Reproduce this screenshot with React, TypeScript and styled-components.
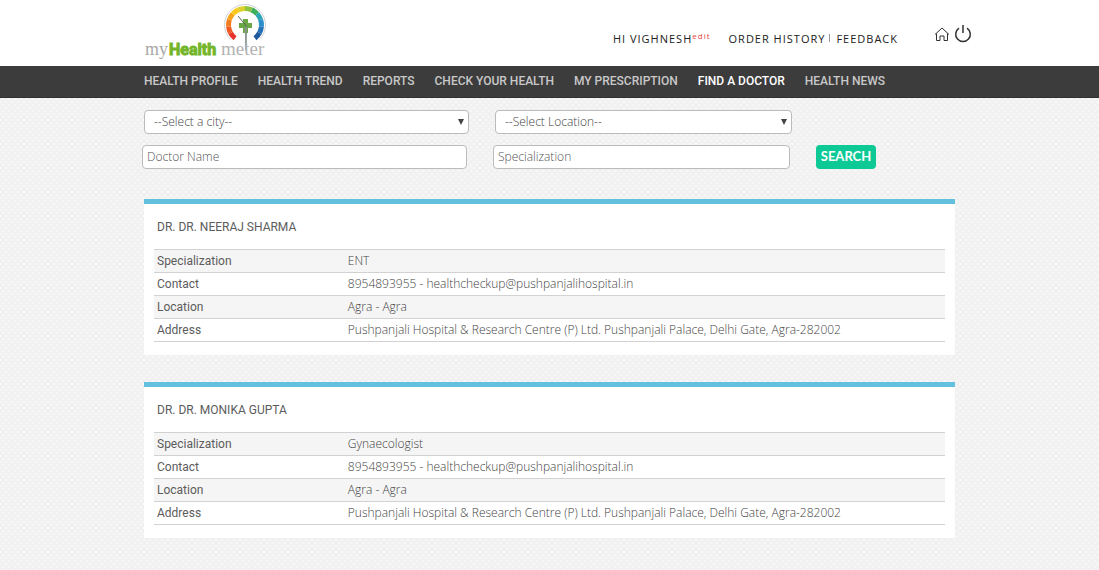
import React from "react";
import styled, { createGlobalStyle } from "styled-components";

const GlobalStyle = createGlobalStyle`
  * { box-sizing: border-box; }
  body {
    margin: 0;
    background-color: #f1f1f1;
    background-image: radial-gradient(#f7f7f7 1px, transparent 1px), radial-gradient(#f7f7f7 1px, transparent 1px);
    background-size: 6px 6px;
    background-position: 0 0, 3px 3px;
    color: #666;
    font-family: "Open Sans", sans-serif;
    font-size: 12px;
    font-weight: 300;
  }
`;

const Container = styled.div`
  width: 100%;
  max-width: 843px;
  margin: 0 auto;
  padding: 0 16px;
`;

const Header = styled.header`
  background: #fff;
`;

const HeaderInner = styled(Container)`
  display: flex;
  justify-content: space-between;
  align-items: flex-start;
  height: 66px;
`;

const LogoLink = styled.a`
  display: block;
  height: 66px;
  svg { display: block; }
`;

const UserBar = styled.div`
  display: flex;
  align-items: center;
  height: 30px;
  margin-top: 23px;
  margin-right: -17px;
  font-size: 11px;
  font-weight: 400;
  letter-spacing: 1px;
`;

const Greeting = styled.span`
  margin-right: 18px;
  color: #222;
`;

const EditLink = styled.a`
  position: relative;
  top: -4px;
  color: #e8413c;
  font-size: 8px;
  text-decoration: none;
`;

const TopLink = styled.a`
  color: #222;
  text-decoration: none;
`;

const Separator = styled.span`
  width: 1px;
  height: 8px;
  margin: 0 6px 0 4px;
  background: #999;
`;

const IconGroup = styled.div`
  display: flex;
  align-items: center;
  gap: 4px;
  margin-left: 36px;
  padding-bottom: 8px;
`;

const IconLink = styled.a`
  display: block;
  color: #333;
  svg { display: block; }
`;

const Nav = styled.nav`
  background: #3c3c3c;
  border-bottom: 1px solid #2f2f2f;
`;

const NavInner = styled(Container)`
  display: flex;
  gap: 20px;
`;

const NavLink = styled.a<{ $active?: boolean }>`
  padding: 7px 0 8px;
  color: ${(p) => (p.$active ? "#fff" : "#c8c8c8")};
  font-family: Roboto, sans-serif;
  font-size: 12px;
  font-weight: 500;
  line-height: 16px;
  text-decoration: none;
  white-space: nowrap;
`;

const SearchForm = styled.form`
  display: grid;
  gap: 11px;
  padding: 12px 0 30px;
`;

const FieldRow = styled.div<{ $outset?: boolean }>`
  display: grid;
  grid-template-columns: 325fr 297fr 60px;
  column-gap: 26px;
  margin-left: ${(p) => (p.$outset ? "-2px" : "0")};
  padding-right: ${(p) => (p.$outset ? "79px" : "77px")};
`;

const SelectBox = styled.div`
  position: relative;
  svg {
    position: absolute;
    top: 9px;
    right: 5px;
    pointer-events: none;
  }
`;

const Select = styled.select`
  display: block;
  width: 100%;
  height: 24px;
  padding: 0 20px 2px 9px;
  border: 1px solid #bbb;
  border-radius: 4px;
  background: #fff;
  color: #444;
  font: inherit;
  appearance: none;
`;

const TextInput = styled.input`
  width: 100%;
  height: 24px;
  padding: 0 4px 2px;
  border: 1px solid #bbb;
  border-radius: 4px;
  background: #fff;
  color: #444;
  font: inherit;
  &::placeholder { color: #555; opacity: 1; }
`;

const SearchButton = styled.button`
  height: 24px;
  padding: 0 0 2px;
  border: 0;
  border-radius: 4px;
  background: #0dc996;
  color: #fff;
  font-family: Lato, sans-serif;
  font-size: 13px;
  font-weight: 700;
`;

const Results = styled.section`
  display: grid;
  gap: 27px;
  padding-bottom: 31px;
`;

const Card = styled.article`
  padding: 14px 10px 13px;
  border-top: 5px solid #64c1de;
  background: #fff;
`;

const DoctorName = styled.h2`
  margin: 0 0 13px;
  padding: 0 3px;
  color: #5c5c5c;
  font-family: Roboto, sans-serif;
  font-size: 12px;
  font-weight: 400;
  line-height: 18px;
`;

const Details = styled.table`
  width: 100%;
  border-collapse: collapse;
  table-layout: fixed;
  line-height: 18px;
`;

const DetailRow = styled.tr`
  border-top: 1px solid #d2d2d2;
  border-bottom: 1px solid #d2d2d2;
  &:nth-child(odd) { background: #f5f5f5; }
`;

const Label = styled.th`
  width: 24%;
  padding: 2px 3px;
  color: #5c5c5c;
  font-family: Roboto, sans-serif;
  font-weight: 400;
  text-align: left;
`;

const Value = styled.td`
  padding: 2px 4px;
  color: #444;
`;

const navItems = [
  "HEALTH PROFILE",
  "HEALTH TREND",
  "REPORTS",
  "CHECK YOUR HEALTH",
  "MY PRESCRIPTION",
  "FIND A DOCTOR",
  "HEALTH NEWS",
];

const clinic = {
  contact: "8954893955 - healthcheckup@pushpanjalihospital.in",
  location: "Agra - Agra",
  address:
    "Pushpanjali Hospital & Research Centre (P) Ltd. Pushpanjali Palace, Delhi Gate, Agra-282002",
};

const doctors = [
  { name: "DR. DR. NEERAJ SHARMA", specialization: "ENT", ...clinic },
  { name: "DR. DR. MONIKA GUPTA", specialization: "Gynaecologist", ...clinic },
];

const gaugeColors = [
  "#e5352b", "#ee5a24", "#f47c20", "#f9a51a", "#fcc81c", "#dcd02c",
  "#8fc43f", "#3fae5a", "#2ba5b5", "#2b8fcb", "#2473b8", "#1f5a9e",
];

function point(angle: number, radius: number) {
  const rad = (angle * Math.PI) / 180;
  return `${(101 + radius * Math.sin(rad)).toFixed(2)} ${(25 - radius * Math.cos(rad)).toFixed(2)}`;
}

function arc(from: number, to: number, radius: number) {
  const large = to - from > 180 ? 1 : 0;
  return `M${point(from, radius)} A${radius} ${radius} 0 ${large} 1 ${point(to, radius)}`;
}

function Logo() {
  const start = -143;
  const step = 286 / gaugeColors.length;
  return (
    <svg width="130" height="66" viewBox="0 0 130 66" role="img" aria-label="my Health meter">
      <path d={arc(-135, 135, 20.5)} fill="none" stroke="#cfd4d8" strokeWidth="1" />
      {gaugeColors.map((color, i) => (
        <path
          key={color}
          d={arc(start + i * step, start + (i + 1) * step, 16.5)}
          fill="none"
          stroke={color}
          strokeWidth="5"
        />
      ))}
      <path d="M99 19h5v4h4v5h-4v5h-5v-5h-4v-5h4z" fill="#69a843" />
      <path d="M94 16l8 9.500v25" fill="none" stroke="#55625c" strokeWidth="1" />
      <path d="M100.500 27h2.500l-1 24z" fill="#8b9692" />
      <text x="1" y="55" fontFamily="Liberation Serif, serif" fontSize="18" fontWeight="400" fill="#a9a9a9">my</text>
      <text x="25" y="55" fontFamily="Roboto, sans-serif" fontSize="16" fontWeight="700" fill="#74b52b" stroke="#74b52b" strokeWidth="1">
        Health
      </text>
      <text x="77" y="55" fontFamily="Liberation Serif, serif" fontSize="19" fontWeight="400" fill="#b3b3b3">meter</text>
    </svg>
  );
}

function HomeIcon() {
  return (
    <svg width="16" height="14" viewBox="0 0 16 14" fill="none" stroke="currentColor" strokeWidth="1">
      <path d="M1 7.500L8 1l7 6.500M2.500 6.500v7h3.500V9h4v4.500h3.500v-7" />
    </svg>
  );
}

function PowerIcon() {
  return (
    <svg width="18" height="18" viewBox="0 0 18 18" fill="none" stroke="currentColor" strokeWidth="1.500">
      <path d="M5 3.200a7.300 7.300 0 1 0 8 0M9 0v8" />
    </svg>
  );
}

function Arrow() {
  return (
    <svg width="6" height="6" viewBox="0 0 6 6" aria-hidden="true">
      <path d="M0 0h6L3 6z" fill="#444" />
    </svg>
  );
}

export default function App() {
  return (
    <>
      <GlobalStyle />
      <Header>
        <HeaderInner>
          <LogoLink href="#">
            <Logo />
          </LogoLink>
          <UserBar>
            <Greeting>
              HI VIGHNESH<EditLink href="#">edit</EditLink>
            </Greeting>
            <TopLink href="#">ORDER HISTORY</TopLink>
            <Separator />
            <TopLink href="#">FEEDBACK</TopLink>
            <IconGroup>
              <IconLink href="#" aria-label="Home"><HomeIcon /></IconLink>
              <IconLink href="#" aria-label="Log out"><PowerIcon /></IconLink>
            </IconGroup>
          </UserBar>
        </HeaderInner>
      </Header>
      <Nav>
        <NavInner>
          {navItems.map((item) => (
            <NavLink key={item} href="#" $active={item === "FIND A DOCTOR"}>{item}</NavLink>
          ))}
        </NavInner>
      </Nav>
      <Container as="main">
        <SearchForm onSubmit={(e) => e.preventDefault()}>
          <FieldRow>
            <SelectBox>
              <Select aria-label="City"><option>--Select a city--</option></Select>
              <Arrow />
            </SelectBox>
            <SelectBox>
              <Select aria-label="Location"><option>--Select Location--</option></Select>
              <Arrow />
            </SelectBox>
          </FieldRow>
          <FieldRow $outset>
            <TextInput aria-label="Doctor Name" placeholder="Doctor Name" />
            <TextInput aria-label="Specialization" placeholder="Specialization" />
            <SearchButton type="submit">SEARCH</SearchButton>
          </FieldRow>
        </SearchForm>
        <Results>
          {doctors.map((d) => (
            <Card key={d.name}>
              <DoctorName>{d.name}</DoctorName>
              <Details>
                <tbody>
                  <DetailRow><Label scope="row">Specialization</Label><Value>{d.specialization}</Value></DetailRow>
                  <DetailRow><Label scope="row">Contact</Label><Value>{d.contact}</Value></DetailRow>
                  <DetailRow><Label scope="row">Location</Label><Value>{d.location}</Value></DetailRow>
                  <DetailRow><Label scope="row">Address</Label><Value>{d.address}</Value></DetailRow>
                </tbody>
              </Details>
            </Card>
          ))}
        </Results>
      </Container>
    </>
  );
}
